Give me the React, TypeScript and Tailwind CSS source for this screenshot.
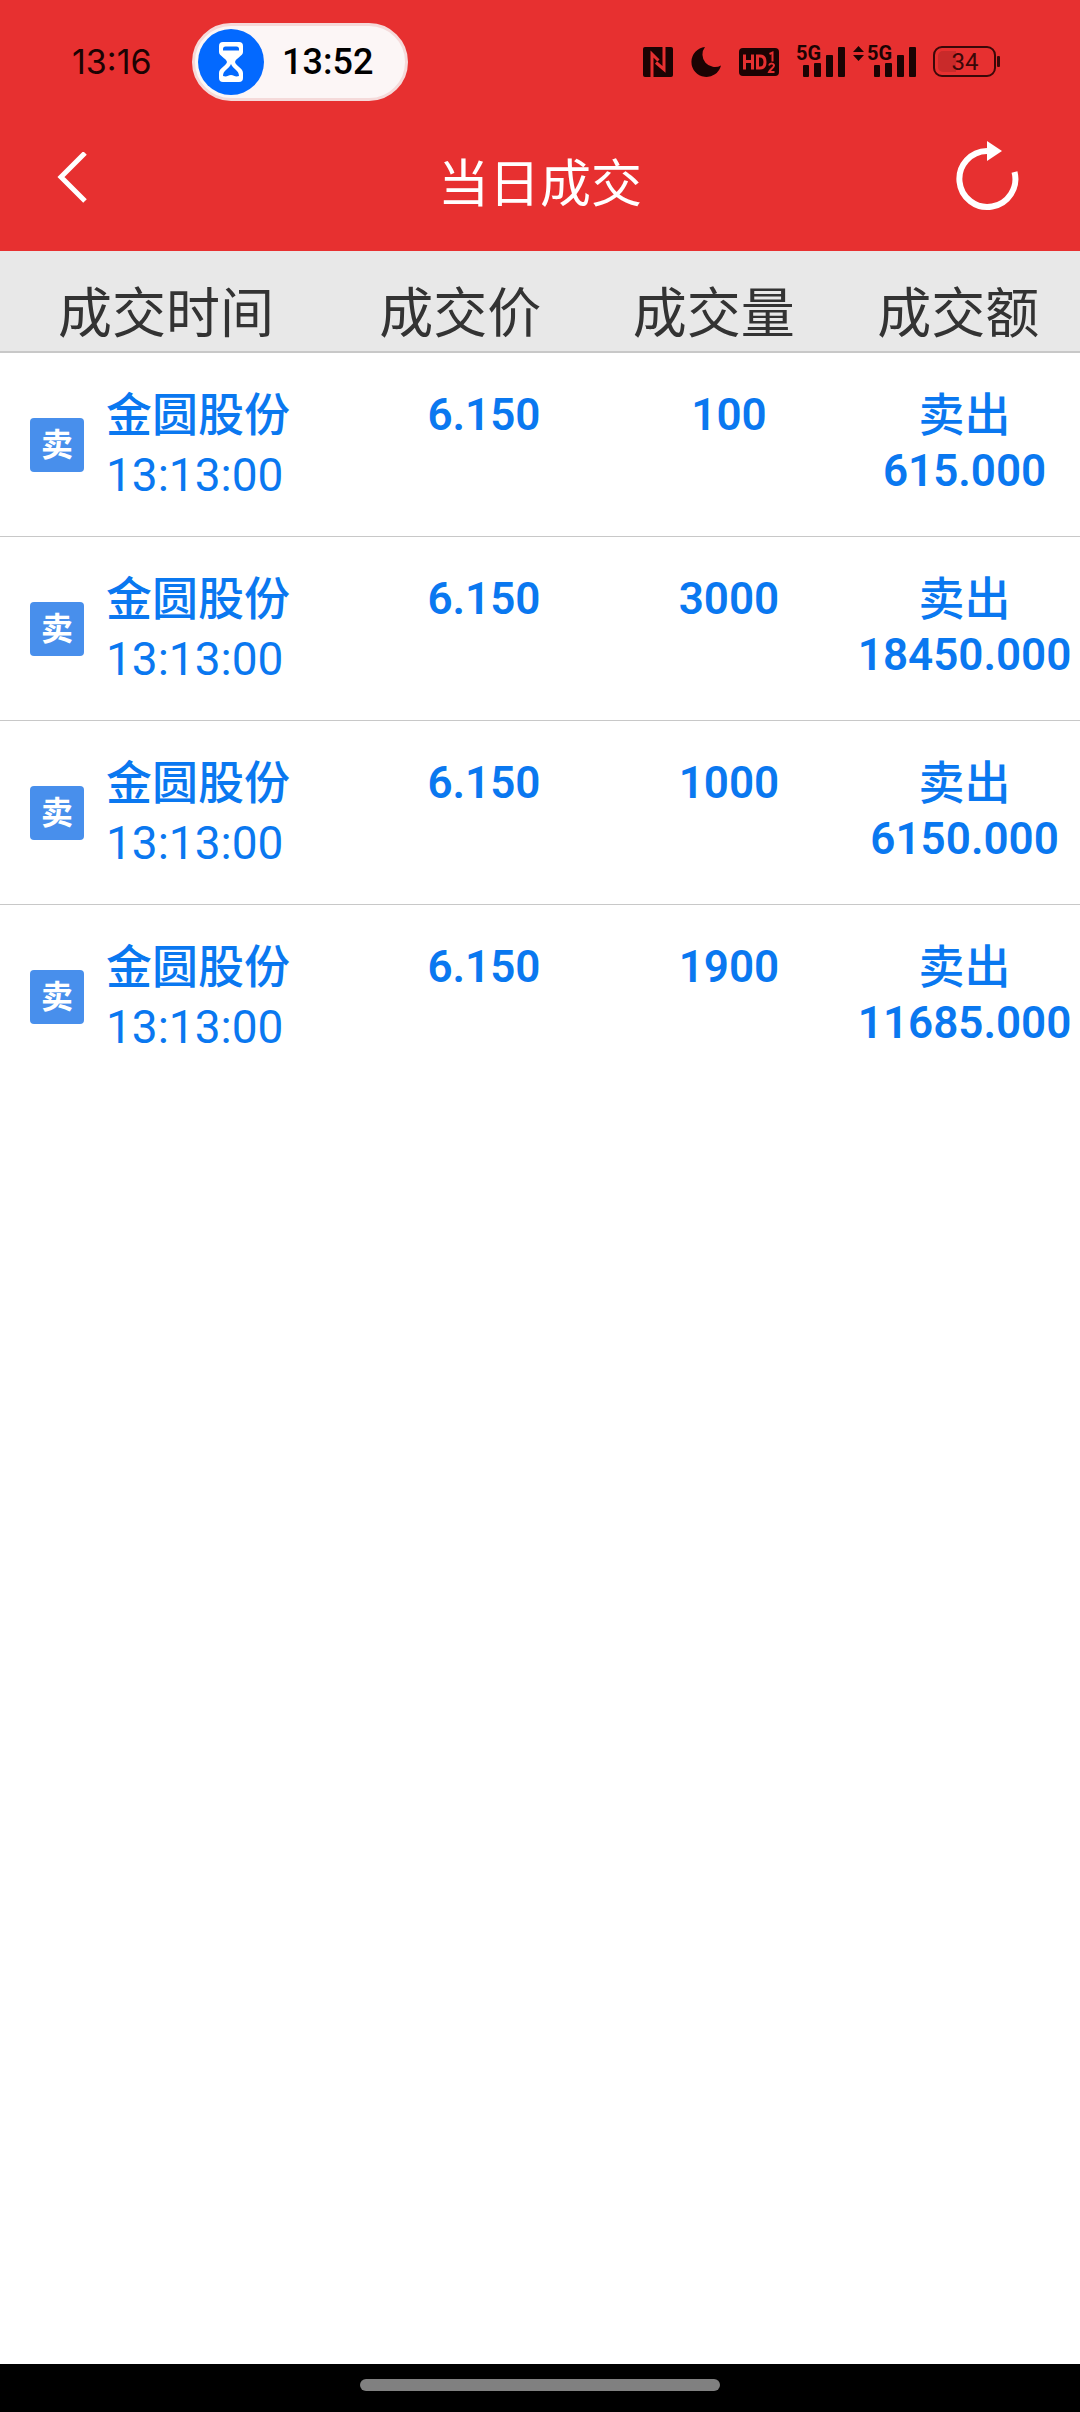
type Deal = {
  id: number;
  name: string;
  time: string;
  price: string;
  volume: string;
  side: string;
  amount: string;
};

const deals: Deal[] = [
  { id: 1, name: '金圆股份', time: '13:13:00', price: '6.150', volume: '100', side: '卖出', amount: '615.000' },
  { id: 2, name: '金圆股份', time: '13:13:00', price: '6.150', volume: '3000', side: '卖出', amount: '18450.000' },
  { id: 3, name: '金圆股份', time: '13:13:00', price: '6.150', volume: '1000', side: '卖出', amount: '6150.000' },
  { id: 4, name: '金圆股份', time: '13:13:00', price: '6.150', volume: '1900', side: '卖出', amount: '11685.000' },
];

function HourglassIcon() {
  return (
    <svg width="24" height="40" viewBox="0 0 24 40" aria-hidden="true">
      <path
        d="M4 0h16a4 4 0 0 1 4 4v6c0 4-7 6-8 10 1 4 8 6 8 11v5a4 4 0 0 1-4 4H4a4 4 0 0 1-4-4v-5c0-5 7-7 8-11-1-4-8-6-8-10V4a4 4 0 0 1 4-4Z"
        fill="#fff"
      />
      <path d="M4 8.500V7q0-2.500 2.500-2.500h11Q20 4.500 20 7v1.500Z" fill="#0369ff" />
      <path d="M12 22c2 5 8 6 8 12-4 1.500-5-1-8-1s-4 2.500-8 1c0-6 6-7 8-12Z" fill="#0369ff" />
    </svg>
  );
}

function NfcIcon() {
  return (
    <svg width="30" height="30" viewBox="0 0 30 30" aria-hidden="true">
      <rect width="30" height="30" rx="2" fill="#1c0303" />
      <path d="M9 30V7l6.500 6.500" stroke="#e73030" strokeWidth="3" fill="none" />
      <path d="M21 0v22.500L13 15.500" stroke="#e73030" strokeWidth="3" fill="none" />
    </svg>
  );
}

function MoonIcon() {
  return (
    <svg width="30" height="30" viewBox="0 0 30 30" aria-hidden="true">
      <path d="M14 0A15 15 0 1 0 30 18.500A12.500 12.500 0 0 1 14 0Z" fill="#1c0303" />
    </svg>
  );
}

function HdIcon() {
  return (
    <svg width="40" height="28" viewBox="0 0 40 28" aria-hidden="true">
      <rect width="40" height="28" rx="4" fill="#1c0303" />
      <path
        d="M5.500 6.500v15M13.500 6.500v15M5.500 13.500h8M18.500 8v12h2.500c3 0 5-2 5-6s-2-6-5-6Z"
        stroke="#e73030"
        strokeWidth="3"
        fill="none"
      />
      <path d="M30.500 6l3-1.500v9M30 17.500c1-3 5-2 5 0s-4 4-5 6.500h5.500" stroke="#e73030" strokeWidth="2" fill="none" />
    </svg>
  );
}

function SignalIcon({ data }: { data?: boolean }) {
  return (
    <svg
      width={data ? 64 : 52}
      height="46"
      viewBox={data ? '-18 -6 64 46' : '-6 -6 52 46'}
      fill="#1c0303"
      aria-hidden="true"
    >
      {data && <path d="M-17 7l5.500-6 5.500 6ZM-17 10l5.500 6 5.500-6Z" />}
      <text x="-3" y="15" fontSize="20" fontWeight="700" fontFamily="Roboto, sans-serif">
        5G
      </text>
      <rect x="4" y="20" width="6" height="12" rx="1" />
      <rect x="15" y="18" width="7" height="14" rx="1" />
      <rect x="27" y="10" width="7" height="22" rx="1" />
      <rect x="39" y="2" width="7" height="30" rx="1" />
    </svg>
  );
}

function BatteryIcon() {
  return (
    <svg width="68" height="32" viewBox="0 0 68 32" aria-hidden="true">
      <rect x="1" y="1" width="61" height="29" rx="8" fill="none" stroke="#3a0808" strokeWidth="2" />
      <path d="M10 5h13v21H10a5 5 0 0 1-5-5V10a5 5 0 0 1 5-5Z" fill="#c92a2a" />
      <rect x="64" y="10" width="3" height="11" rx="1" fill="#3a0808" />
      <text x="32" y="24" fontSize="24" textAnchor="middle" fill="#3a0808" fontFamily="Roboto, sans-serif">
        34
      </text>
    </svg>
  );
}

function StatusBar() {
  return (
    <div className="flex items-center justify-between pt-[23px] pr-[79px] pl-[72px]">
      <div className="flex items-center gap-9">
        <span className="w-[84px] font-[Inter,sans-serif] text-[34px] leading-none text-[#1c0303]">13:16</span>
        <div className="flex h-[78px] w-[216px] items-center gap-[18px] rounded-full border-3 border-[#f5dada] bg-[#fcf6f6] pl-[3px]">
          <span className="flex size-[66px] items-center justify-center rounded-full bg-[#0369ff]">
            <HourglassIcon />
          </span>
          <span className="text-4xl leading-none font-medium text-black">13:52</span>
        </div>
      </div>
      <div className="flex items-center">
        <div className="flex items-center gap-[18px]">
          <NfcIcon />
          <MoonIcon />
          <HdIcon />
        </div>
        <div className="flex items-center gap-[7px] pr-[17px] pl-[14px]">
          <SignalIcon />
          <SignalIcon data />
        </div>
        <BatteryIcon />
      </div>
    </div>
  );
}

function NavBar() {
  return (
    <div className="flex h-[150px] items-center justify-between px-[54px] pt-1">
      <button type="button" aria-label="返回" className="flex w-20 justify-start">
        <svg width="36" height="52" viewBox="0 0 36 52" fill="none">
          <path d="M31 1 7 25l24 24" stroke="#fff" strokeWidth="5" />
        </svg>
      </button>
      <h1 className="pt-3 text-[51px] leading-none text-white">当日成交</h1>
      <button type="button" aria-label="刷新" className="flex w-20 justify-end">
        <svg width="70" height="76" viewBox="0 0 70 76" fill="none">
          <path d="M31 11A28 28 0 1 0 58.500 32" stroke="#fff" strokeWidth="6" />
          <path d="M31 1v20l15-10Z" fill="#fff" />
        </svg>
      </button>
    </div>
  );
}

function DealRow({ deal }: { deal: Deal }) {
  return (
    <tr className="h-[184px] border-b border-[#c8c8c8] align-top last:border-b-0">
      <td className="pt-8 pl-[30px]">
        <div className="flex items-center gap-[22px]">
          <span className="flex size-[54px] shrink-0 items-center justify-center rounded bg-[#488fec] text-[32px] leading-none font-bold text-white">
            卖
          </span>
          <div className="text-[46px] leading-[60px]">
            <p className="font-medium">{deal.name}</p>
            <p>{deal.time}</p>
          </div>
        </div>
      </td>
      <td className="pt-[34px] pr-1 text-center text-[44px] leading-[56px] font-semibold">{deal.price}</td>
      <td className="pt-[34px] text-center text-[44px] leading-[56px] font-semibold">{deal.volume}</td>
      <td className="pt-[34px] pr-1 text-center leading-[56px]">
        <p className="text-[46px] font-medium">{deal.side}</p>
        <p className="text-[44px] font-semibold">{deal.amount}</p>
      </td>
    </tr>
  );
}

export default function App() {
  return (
    <div className="flex min-h-screen flex-col bg-white font-[Roboto,'Noto_Sans_CJK_SC',sans-serif]">
      <header className="bg-[#e73030]">
        <StatusBar />
        <NavBar />
      </header>
      <main className="grow">
        <table className="w-full table-fixed border-collapse">
          <thead className="bg-[#e8e8e8] text-left text-[54px] leading-[60px] whitespace-nowrap text-[#333]">
            <tr className="h-[101px] border-b-2 border-[#c8c8c8]">
              <th className="w-[34%] pt-7 pl-[58px] font-normal">成交时间</th>
              <th className="w-[22%] pt-7 pl-3 font-normal">成交价</th>
              <th className="w-[23%] pt-7 pl-7 font-normal">成交量</th>
              <th className="w-[21%] pt-7 pl-6 font-normal">成交额</th>
            </tr>
          </thead>
          <tbody className="text-[#0a78f0]">
            {deals.map((deal) => (
              <DealRow key={deal.id} deal={deal} />
            ))}
          </tbody>
        </table>
      </main>
      <footer className="flex h-12 justify-center bg-black pt-[15px]">
        <div className="h-3 w-[360px] rounded-full bg-[#808080]" />
      </footer>
    </div>
  );
}
